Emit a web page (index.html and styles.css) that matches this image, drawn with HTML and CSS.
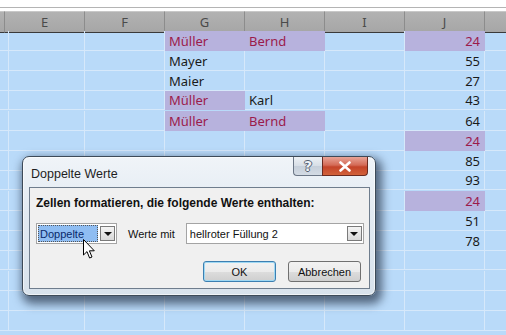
FILE: index.html
```html
<!DOCTYPE html>
<html>
<head>
<meta charset="utf-8">
<link rel="stylesheet" href="styles.css">
</head>
<body>
<div class="screen">
  <div class="topbar"><div class="topline"></div></div>
  <div class="sheet">
    <div class="hdr edge"></div><div class="hdr">E</div><div class="hdr">F</div><div class="hdr">G</div><div class="hdr">H</div><div class="hdr">I</div><div class="hdr">J</div><div class="hdr last"></div>

    <div class="c edge"></div><div class="c"></div><div class="c"></div><div class="c dup">Müller</div><div class="c dup">Bernd</div><div class="c"></div><div class="c dup num">24</div><div class="c last"></div>
    <div class="c edge"></div><div class="c"></div><div class="c"></div><div class="c">Mayer</div><div class="c"></div><div class="c"></div><div class="c num">55</div><div class="c last"></div>
    <div class="c edge"></div><div class="c"></div><div class="c"></div><div class="c">Maier</div><div class="c"></div><div class="c"></div><div class="c num">27</div><div class="c last"></div>
    <div class="c edge r19"></div><div class="c r19"></div><div class="c r19"></div><div class="c dup r19">Müller</div><div class="c r19">Karl</div><div class="c r19"></div><div class="c num r19">43</div><div class="c last r19"></div>
    <div class="c edge"></div><div class="c"></div><div class="c"></div><div class="c dup">Müller</div><div class="c dup">Bernd</div><div class="c"></div><div class="c num">64</div><div class="c last"></div>
    <div class="c edge"></div><div class="c"></div><div class="c"></div><div class="c"></div><div class="c"></div><div class="c"></div><div class="c dup num">24</div><div class="c last"></div>
    <div class="c edge"></div><div class="c"></div><div class="c"></div><div class="c"></div><div class="c"></div><div class="c"></div><div class="c num">85</div><div class="c last"></div>
    <div class="c edge r19"></div><div class="c r19"></div><div class="c r19"></div><div class="c r19"></div><div class="c r19"></div><div class="c r19"></div><div class="c num r19">93</div><div class="c last r19"></div>
    <div class="c edge"></div><div class="c"></div><div class="c"></div><div class="c"></div><div class="c"></div><div class="c"></div><div class="c dup num">24</div><div class="c last"></div>
    <div class="c edge"></div><div class="c"></div><div class="c"></div><div class="c"></div><div class="c"></div><div class="c"></div><div class="c num">51</div><div class="c last"></div>
    <div class="c edge"></div><div class="c"></div><div class="c"></div><div class="c"></div><div class="c"></div><div class="c"></div><div class="c num">78</div><div class="c last"></div>
    <div class="c edge r19"></div><div class="c r19"></div><div class="c r19"></div><div class="c r19"></div><div class="c r19"></div><div class="c r19"></div><div class="c r19"></div><div class="c last r19"></div>
    <div class="c edge"></div><div class="c"></div><div class="c"></div><div class="c"></div><div class="c"></div><div class="c"></div><div class="c"></div><div class="c last"></div>
    <div class="c edge"></div><div class="c"></div><div class="c"></div><div class="c"></div><div class="c"></div><div class="c"></div><div class="c"></div><div class="c last"></div>
    <div class="c edge"></div><div class="c"></div><div class="c"></div><div class="c"></div><div class="c"></div><div class="c"></div><div class="c"></div><div class="c last"></div>
  </div>

  <div class="dialog">
    <div class="titlebar">
      <span class="title">Doppelte Werte</span>
      <div class="capbtns">
        <div class="cap help">?</div>
        <div class="cap close">
          <svg width="14" height="11" viewBox="0 0 14 11"><path d="M2.5 1.5 L11.5 9.5 M11.5 1.5 L2.5 9.5" stroke="#fff" stroke-width="2.6" stroke-linecap="round"/></svg>
        </div>
      </div>
    </div>
    <div class="panel">
      <div class="heading">Zellen formatieren, die folgende Werte enthalten:</div>
      <div class="row">
        <div class="combo small"><span class="sel">Doppelte</span><span class="drop"><i class="tri"></i></span></div>
        <span class="label">Werte mit</span>
        <div class="combo wide"><span class="val">hellroter Füllung 2</span><span class="drop"><i class="tri"></i></span></div>
      </div>
      <div class="buttons">
        <div class="btn ok">OK</div>
        <div class="btn">Abbrechen</div>
      </div>
    </div>
  </div>

  <svg class="cursor" width="13" height="21" viewBox="0 0 13 21"><path d="M0.5 0.5 L0.5 16 L4 12.6 L6.6 19 L9 18 L6.4 11.8 L11.3 11.8 Z" fill="#fff" stroke="#000" stroke-width="1" stroke-linejoin="round"/></svg>
</div>
</body>
</html>
```
FILE: styles.css
```css
html, body { margin: 0; padding: 0; }
body { background: #fff; }
.screen {
  position: relative;
  width: 506px;
  height: 335px;
  overflow: hidden;
  background: #b9daf9;
}
.topbar {
  height: 11px;
  background: #fff;
  display: flex;
  flex-direction: column;
}
.topline {
  margin-top: 7px;
  height: 1px;
  background: #b4b4b4;
}
.sheet {
  display: grid;
  grid-template-columns: 5px repeat(6, 80px) 1fr;
  grid-auto-rows: 20px;
  font-family: "Noto Sans", sans-serif;
  font-size: 13px;
}
.hdr {
  height: 22px;
  box-sizing: border-box;
  background: linear-gradient(#b2b2b2, #a6a6a6);
  border-right: 1px solid #8c8c8c;
  border-top: 1px solid #c8c8c8;
  border-bottom: 1px solid #3a3a3a;
  color: #4a4a4a;
  font-family: "Noto Sans", sans-serif;
  font-size: 13px;
  display: flex;
  align-items: center;
  justify-content: center;
  line-height: 1;
}
.hdr.last { border-right: none; }
.c {
  box-sizing: border-box;
  border-right: 1px solid #d6e8fa;
  border-bottom: 1px solid #d6e8fa;
  color: #1a1a1a;
  padding: 0 4px;
  display: flex;
  align-items: center;
  white-space: nowrap;
  overflow: hidden;
  line-height: 1;
  padding-top: 1px;
}
.c.r19 { height: 19px; }
.c.last { border-right: none; }
.c.dup {
  background: #b7b2dd;
  color: #9b1b4b;
  border-color: #b7b2dd;
}
.c.num { justify-content: flex-end; }

/* dialog */
.dialog {
  position: absolute;
  left: 22px;
  top: 156px;
  width: 354px;
  height: 140px;
  box-sizing: border-box;
  border: 1px solid #3d4a58;
  border-radius: 7px;
  background: linear-gradient(#f0f4f8 0%, #e2eaf2 40%, #d8e2ec 100%);
  box-shadow: 0 0 0 1px rgba(255,255,255,0.6) inset, 3px 5px 10px 3px rgba(15,25,45,0.6);
  display: flex;
  flex-direction: column;
  padding: 0 5px 6px 6px;
  font-family: "Liberation Sans", sans-serif;
}
.titlebar {
  height: 30px;
  display: flex;
  align-items: flex-start;
  justify-content: space-between;
}
.title {
  margin-top: 10px;
  margin-left: 2px;
  font-size: 12.5px;
  color: #1e1e1e;
}
.capbtns {
  display: flex;
  margin-right: 2px;
}
.cap {
  height: 19px;
  box-sizing: border-box;
  border: 1px solid #6b7686;
  border-top: none;
  display: flex;
  align-items: center;
  justify-content: center;
}
.help {
  width: 29px;
  border-radius: 0 0 0 4px;
  background: linear-gradient(#edf1f5 0%, #d7dee6 50%, #c6cfda 51%, #d3dbe4 100%);
  color: #eef2f6;
  font-family: "DejaVu Sans", sans-serif;
  font-weight: bold;
  font-size: 14px;
  border-right: none;
  text-shadow: 1px 0 0 #556070, -1px 0 0 #556070, 0 1px 0 #556070, 0 -1px 0 #556070;
}
.close {
  width: 46px;
  border-radius: 0 0 4px 0;
  background: linear-gradient(#e8a497 0%, #d46b57 45%, #c4442a 55%, #d2623a 100%);
  border-color: #6a2a20;
}
.panel {
  flex: 1;
  background: #f0f0f0;
  border: 1px solid #6f7d8d;
  display: flex;
  flex-direction: column;
  padding: 0 0 0 6px;
  font-size: 11px;
  color: #111;
}
.heading {
  margin-top: 8px;
  font-weight: bold;
  font-size: 12px;
}
.row {
  margin-top: 13px;
  display: flex;
  align-items: center;
  height: 21px;
}
.combo {
  box-sizing: border-box;
  height: 21px;
  border: 1px solid #a4a4a4;
  background: #fff;
  display: flex;
  align-items: center;
  padding: 1px;
}
.combo.small { width: 81px; }
.combo.wide { width: 178px; margin-left: 11px; }
.sel {
  flex: 1;
  height: 100%;
  background: #8fbdf2;
  color: #0a2a6a;
  font-size: 11px;
  display: flex;
  align-items: center;
  padding-left: 2px;
  outline: 1px dotted #555;
  outline-offset: -1px;
}
.val {
  flex: 1;
  font-size: 11px;
  padding-left: 2px;
}
.drop {
  width: 15px;
  height: 15px;
  box-sizing: border-box;
  border: 1px solid #7a7a7a;
  background: linear-gradient(#f4f4f4, #d8d8d8);
  margin-left: 2px;
  display: flex;
  align-items: center;
  justify-content: center;
}
.tri {
  width: 0;
  height: 0;
  border-left: 4px solid transparent;
  border-right: 4px solid transparent;
  border-top: 4px solid #111;
}
.label {
  margin-left: 11px;
  font-size: 11px;
}
.buttons {
  margin-top: 17px;
  display: flex;
  justify-content: flex-end;
  gap: 12px;
  padding-right: 8px;
}
.btn {
  width: 73px;
  height: 21px;
  box-sizing: border-box;
  border: 1px solid #707070;
  border-radius: 3px;
  background: linear-gradient(#f2f2f2 0%, #ebebeb 50%, #dddddd 51%, #cfcfcf 100%);
  display: flex;
  align-items: center;
  justify-content: center;
  font-size: 11px;
}
.btn.ok {
  border-color: #3c7fb1;
  box-shadow: inset 0 0 0 1px #9fd8f3;
}
.cursor {
  position: absolute;
  left: 83px;
  top: 239px;
}
```
